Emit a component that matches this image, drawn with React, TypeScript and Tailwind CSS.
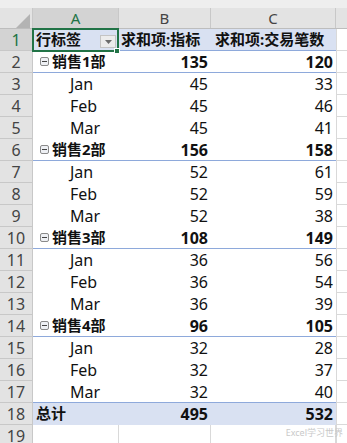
import React from "react";

type Row = {
  label: string;
  b: string;
  c: string;
  kind: "header" | "group" | "item" | "total" | "empty";
};

const rows: Row[] = [
  { label: "行标签", b: "求和项:指标", c: "求和项:交易笔数", kind: "header" },
  { label: "销售1部", b: "135", c: "120", kind: "group" },
  { label: "Jan", b: "45", c: "33", kind: "item" },
  { label: "Feb", b: "45", c: "46", kind: "item" },
  { label: "Mar", b: "45", c: "41", kind: "item" },
  { label: "销售2部", b: "156", c: "158", kind: "group" },
  { label: "Jan", b: "52", c: "61", kind: "item" },
  { label: "Feb", b: "52", c: "59", kind: "item" },
  { label: "Mar", b: "52", c: "38", kind: "item" },
  { label: "销售3部", b: "108", c: "149", kind: "group" },
  { label: "Jan", b: "36", c: "56", kind: "item" },
  { label: "Feb", b: "36", c: "54", kind: "item" },
  { label: "Mar", b: "36", c: "39", kind: "item" },
  { label: "销售4部", b: "96", c: "105", kind: "group" },
  { label: "Jan", b: "32", c: "28", kind: "item" },
  { label: "Feb", b: "32", c: "37", kind: "item" },
  { label: "Mar", b: "32", c: "40", kind: "item" },
  { label: "总计", b: "495", c: "532", kind: "total" },
  { label: "", b: "", c: "", kind: "empty" },
];

const MinusBox = () => (
  <span className="mr-[3px] flex h-[9px] w-[9px] items-center justify-center rounded-[2px] border border-[#8a8a8a] bg-[#eef0f4]">
    <span className="h-px w-[5px] bg-[#444]" />
  </span>
);

const DropButton = () => (
  <span className="absolute right-[3px] top-[6px] flex h-[13px] w-[16px] items-center justify-center border border-[#c4c4c4] bg-[#ececec]">
    <svg width="7" height="4" viewBox="0 0 7 4">
      <polygon points="0,0 7,0 3.5,4" fill="#6b6b6b" />
    </svg>
  </span>
);

const App = () => {
  return (
    <div
      className="relative h-[443px] w-[347px] overflow-hidden bg-white text-[#111]"
      style={{ fontFamily: '"Noto Sans", "Noto Sans CJK SC", sans-serif' }}
    >
      {/* top strip */}
      <div className="h-[8px] bg-[#eeeeee]" />

      {/* column headers */}
      <div className="flex h-[21px] border-b border-[#bdbdbd] bg-[#e3e3e3] text-[15px] leading-[20px] text-[#444]">
        <div className="relative w-[33px] border-r border-[#c8c8c8]">
          <svg className="absolute left-[16px] top-[6px]" width="14" height="14" viewBox="0 0 14 14">
            <polygon points="0,14 14,14 14,0" fill="#b3b3b3" />
          </svg>
        </div>
        <div className="w-[86px] border-r border-[#c8c8c8] bg-[#d3d3d3] text-center text-[#217346]">A</div>
        <div className="w-[92px] border-r border-[#c8c8c8] text-center">B</div>
        <div className="w-[125px] border-r border-[#c8c8c8] text-center">C</div>
        <div className="flex-1" />
      </div>

      {rows.map((r, i) => {
        const n = i + 1;
        const blueBottom = r.kind === "header" || r.kind === "group" || n === 17;
        const filled = r.kind === "header" || r.kind === "total";
        const bold = r.kind !== "item" && r.kind !== "empty";
        const cellBorder = blueBottom ? "border-[#8ea9db]" : "border-transparent";
        return (
          <div key={i} className="flex h-[22px]">
            <div
              className={`flex w-[33px] items-center justify-center border-b border-r border-[#c8c8c8] text-[16px] ${
                n === 1 ? "bg-[#d3d3d3] text-[#217346]" : "bg-[#e3e3e3] text-[#444]"
              }`}
            >
              {n}
            </div>
            {r.kind === "empty" ? (
              <>
                <div className="w-[86px] border-b border-r border-[#d9d9d9]" />
                <div className="w-[92px] border-b border-r border-[#d9d9d9]" />
                <div className="w-[125px] border-b border-r border-[#d9d9d9]" />
              </>
            ) : (
              <div
                className={`flex border-b ${cellBorder} ${filled ? "bg-[#d9e1f2]" : "bg-white"} ${
                  bold ? "font-bold" : ""
                }`}
              >
                <div
                  className={`relative flex w-[86px] items-center whitespace-nowrap ${
                    r.kind === "item" ? "pl-[37px] text-[16px]" : r.kind === "group" ? "pl-[7px] text-[15px]" : "pl-[3px] text-[15px]"
                  }`}
                >
                  {r.kind === "group" && <MinusBox />}
                  {r.label}
                  {r.kind === "header" && <DropButton />}
                </div>
                {r.kind === "header" ? (
                  <>
                    <div className="flex w-[92px] items-center overflow-hidden whitespace-nowrap pl-[2px] text-[15px]">
                      {r.b}
                    </div>
                    <div className="flex w-[125px] items-center whitespace-nowrap pl-[4px] text-[15px]">{r.c}</div>
                  </>
                ) : (
                  <>
                    <div className="flex w-[92px] items-center justify-end pr-[3px] text-[16px]">{r.b}</div>
                    <div className="flex w-[125px] items-center justify-end pr-[3px] text-[16px]">{r.c}</div>
                  </>
                )}
              </div>
            )}
            <div className="flex-1 border-b border-l border-[#d9d9d9]" />
          </div>
        );
      })}

      {/* selected cell A1 */}
      <div className="absolute left-[32px] top-[28px] h-[24px] w-[87px] border-2 border-[#217346]" />
      <div className="absolute left-[114px] top-[48px] h-[6px] w-[6px] border border-white bg-[#217346]" />

      {/* watermark */}
      <div className="absolute bottom-[4px] right-[4px] text-[9px] text-[#c9c9c9]">Excel学习世界</div>
    </div>
  );
};

export default App;
